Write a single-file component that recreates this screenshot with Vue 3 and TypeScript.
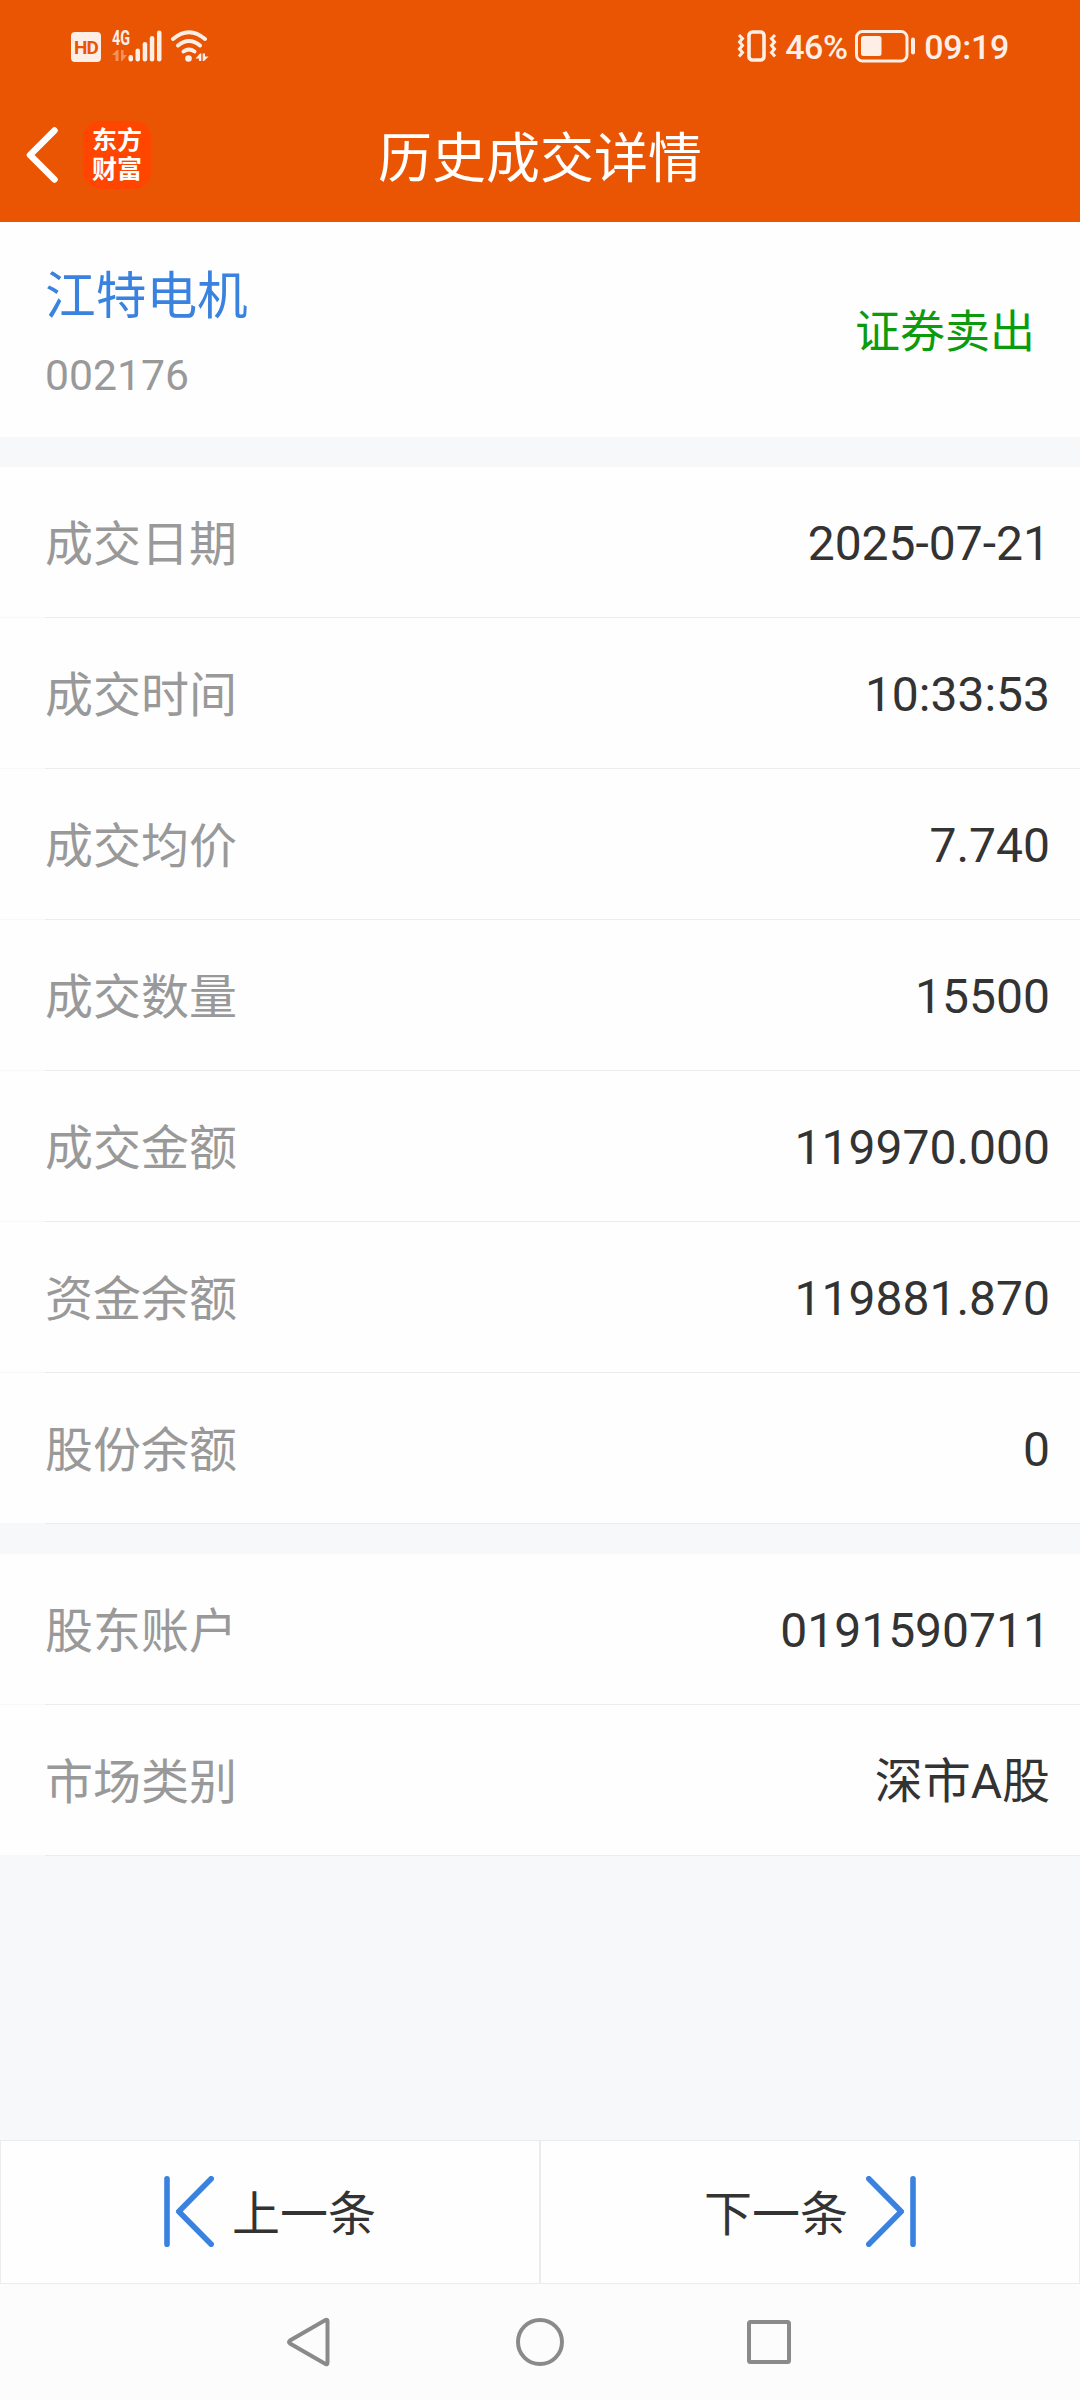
<script setup lang="ts">
interface Field {
  label: string
  value: string
}

const stock = { name: '江特电机', code: '002176', side: '证券卖出' }

const groups: Field[][] = [
  [
    { label: '成交日期', value: '2025-07-21' },
    { label: '成交时间', value: '10:33:53' },
    { label: '成交均价', value: '7.740' },
    { label: '成交数量', value: '15500' },
    { label: '成交金额', value: '119970.000' },
    { label: '资金余额', value: '119881.870' },
    { label: '股份余额', value: '0' },
  ],
  [
    { label: '股东账户', value: '0191590711' },
    { label: '市场类别', value: '深市A股' },
  ],
]
</script>

<template>
  <div class="screen">
    <header class="header">
      <div class="status">
        <div class="status-left">
          <span class="hd">HD</span>
          <div class="network">
            <span class="gen">4G</span>
            <svg class="arrows" width="16" height="12" viewBox="0 0 16 12">
              <path d="M0 5 L5 0 H6.500 V11 H3.500 V5Z M9 0 H11.500 V5 H15 L10 11 H9Z" />
            </svg>
          </div>
          <svg class="signal" width="34" height="32" viewBox="0 0 34 32">
            <rect x="0.500" y="25" width="4.500" height="6.500" rx="2.200" />
            <rect x="7.500" y="18.500" width="4.500" height="13" rx="2.200" />
            <rect x="14.700" y="12" width="4.500" height="19.500" rx="2.200" />
            <rect x="21.800" y="6" width="4.500" height="25.500" rx="2.200" />
            <rect x="29" y="0.500" width="4.500" height="31" rx="2.200" />
          </svg>
          <svg class="wifi" width="40" height="34" viewBox="0 0 40 34">
            <g fill="none" stroke="#fdeee6" stroke-width="4" stroke-linecap="round">
              <path d="M3 9 Q19 -4.500 35 9" />
              <path d="M8 15.500 Q19 6.500 30 15.500" />
              <path d="M13.500 21.500 Q19 17.500 24.500 21.500" />
            </g>
            <circle cx="18.500" cy="28.500" r="3.300" />
            <path d="M25.500 28.500 L30 23.500 H31.300 V31 H29 V28.500Z M32.700 23.500 H35 V26.500 H38.500 L34 31 H32.700Z" />
          </svg>
        </div>
        <div class="status-right">
          <svg class="vibrate" width="40" height="34" viewBox="0 0 40 34">
            <rect x="12" y="3" width="15" height="28" rx="3.500" fill="none" stroke="#fdeee6" stroke-width="3.600" />
            <g fill="none" stroke="#fdeee6" stroke-width="3">
              <path d="M2 6 L5.500 9.500 L2.500 13 L5.500 16.500 L2.500 20 L5.500 23.500 L2 27.500" />
              <path d="M38 6 L34.500 9.500 L37.500 13 L34.500 16.500 L37.500 20 L34.500 23.500 L38 27.500" />
            </g>
          </svg>
          <span class="percent">46%</span>
          <svg class="battery" width="61" height="34" viewBox="0 0 61 34">
            <rect x="1.500" y="2.500" width="50.500" height="29.500" rx="6" fill="none" stroke="#fdeee6" stroke-width="3" />
            <rect x="6" y="7" width="20.500" height="20" rx="2.500" />
            <rect x="56" y="8.500" width="4" height="17" rx="2" />
          </svg>
          <span class="clock">09:19</span>
        </div>
      </div>
      <div class="titlebar">
        <div class="left">
          <svg class="back" width="36" height="58" viewBox="0 0 36 58">
            <path d="M30.500 4.500 L6 29 L30.500 53.500" fill="none" stroke="#fff" stroke-width="6.500" stroke-linecap="round" stroke-linejoin="round" />
          </svg>
          <div class="logo"><span>东方</span><span>财富</span></div>
        </div>
        <h1>历史成交详情</h1>
        <div class="right"></div>
      </div>
    </header>

    <section class="stock">
      <div>
        <div class="name">{{ stock.name }}</div>
        <div class="code">{{ stock.code }}</div>
      </div>
      <div class="side">{{ stock.side }}</div>
    </section>

    <section v-for="(group, i) in groups" :key="i" class="group">
      <div v-for="field in group" :key="field.label" class="row">
        <span class="label">{{ field.label }}</span>
        <span class="value">{{ field.value }}</span>
      </div>
    </section>

    <footer class="pager">
      <button type="button">
        <svg width="50" height="71" viewBox="0 0 50 71">
          <path d="M3 2.800 V68.200 M47.200 2.800 L14.800 35.500 L47.200 68.200" />
        </svg>
        <span>上一条</span>
      </button>
      <button type="button">
        <span>下一条</span>
        <svg width="50" height="71" viewBox="0 0 50 71">
          <path d="M47 2.800 V68.200 M2.800 2.800 L35.200 35.500 L2.800 68.200" />
        </svg>
      </button>
    </footer>

    <nav class="sysnav">
      <svg width="48" height="50" viewBox="0 0 48 50">
        <path d="M38.500 3 Q40.500 2 40.500 4.500 V45.500 Q40.500 48 38.500 47 L3 26.500 Q1 25 3 23.500 Z" />
      </svg>
      <svg width="48" height="50" viewBox="0 0 48 50">
        <circle cx="24" cy="25" r="22" />
      </svg>
      <svg width="48" height="50" viewBox="0 0 48 50">
        <rect x="4" y="5" width="40" height="40" rx="1.500" />
      </svg>
    </nav>
  </div>
</template>

<style>
body {
  margin: 0;
}
</style>

<style scoped>
.screen {
  display: flex;
  flex-direction: column;
  width: 1080px;
  height: 2400px;
  background: #f7f8fa;
  color: #333;
  font-family: Roboto, 'Noto Sans CJK SC', sans-serif;
  overflow: hidden;
}

.header {
  height: 222px;
  background: #ea5504;
  color: #fff;
}

.status {
  display: flex;
  justify-content: space-between;
  height: 92px;
  padding: 0 71px;
  box-sizing: border-box;
  color: #fdeee6;
}

.status svg {
  fill: #fdeee6;
}

.status-left,
.status-right {
  display: flex;
  align-items: flex-start;
}

.hd {
  width: 30px;
  height: 30px;
  margin-top: 32px;
  border-radius: 4px;
  background: #fdeee6;
  color: #ea5504;
  font-size: 19px;
  font-weight: 700;
  line-height: 31px;
  letter-spacing: -0.8px;
  text-align: center;
}

.network {
  display: flex;
  flex-direction: column;
  width: 17px;
  margin: 29px 0 0 11px;
}

.gen {
  font-size: 20px;
  font-weight: 700;
  line-height: 18px;
  transform: scaleX(0.72);
  transform-origin: left center;
  white-space: nowrap;
}

.arrows {
  margin-top: 3px;
  opacity: 0.4;
}

.signal {
  margin: 30px 0 0 -1px;
}

.wifi {
  margin: 30px 0 0 8px;
}

.vibrate {
  margin: 29px 0 0;
}

.percent,
.clock {
  margin-top: 27px;
  font-size: 34px;
  font-weight: 500;
  line-height: 40px;
}

.percent {
  width: 63px;
  margin-left: 8px;
  letter-spacing: -0.5px;
}

.battery {
  margin: 29px 0 0 7px;
}

.clock {
  margin-left: 8px;
  letter-spacing: -0.3px;
}

.titlebar {
  display: flex;
  align-items: center;
  height: 130px;
}

.left,
.right {
  display: flex;
  align-items: center;
  flex: 1;
}

.left {
  padding-bottom: 5px;
}

.back {
  margin-left: 24px;
}

.logo {
  display: flex;
  flex-direction: column;
  justify-content: center;
  align-items: center;
  width: 68px;
  height: 68px;
  margin-left: 23px;
  border-radius: 17px;
  background: #ff4600;
  font-size: 25px;
  font-weight: 700;
  line-height: 29px;
}

h1 {
  margin: 0;
  padding-top: 5px;
  font-size: 54px;
  font-weight: 400;
  line-height: 80px;
}

.stock {
  display: flex;
  justify-content: space-between;
  height: 215px;
  padding: 38px 45px 0;
  box-sizing: border-box;
  background: #fefefe;
}

.name {
  color: #3982df;
  font-size: 50.700px;
  line-height: 74px;
}

.code {
  margin-top: 16px;
  color: #999;
  font-size: 42.700px;
  line-height: 50px;
}

.side {
  margin-top: 40px;
  color: #0c9b0c;
  font-size: 45px;
  line-height: 66px;
}

.group {
  margin-top: 30px;
}

.row {
  display: flex;
  justify-content: space-between;
  height: 151px;
  padding: 0 30px 1px 45px;
  box-sizing: border-box;
  background: linear-gradient(#ebecee, #ebecee) 45px 150px / 1035px 1px no-repeat,
    linear-gradient(#f7f8fa, #f7f8fa) 0 150px / 45px 1px no-repeat, #fefefe;
  font-size: 48px;
}

.label {
  color: #999;
  line-height: 156px;
}

.value {
  line-height: 154px;
}

.pager {
  display: flex;
  height: 144px;
  margin-top: auto;
}

.pager button {
  display: flex;
  flex: 1;
  align-items: center;
  justify-content: center;
  gap: 18px;
  padding: 0;
  border: 1px solid #ebecee;
  background: #fefefe;
  color: #333;
  font: inherit;
  font-size: 48px;
  line-height: 70px;
}

.pager span {
  padding-top: 6px;
}

.pager svg {
  margin-bottom: 1px;
}

.pager path {
  fill: none;
  stroke: #3982df;
  stroke-width: 5.600;
  stroke-linecap: round;
  stroke-linejoin: round;
}

.sysnav {
  display: flex;
  align-items: center;
  justify-content: center;
  gap: 181px;
  height: 116px;
  background: #fcfcfc;
}

.sysnav svg {
  fill: none;
  stroke: #8a8a8a;
  stroke-width: 4;
}
</style>
